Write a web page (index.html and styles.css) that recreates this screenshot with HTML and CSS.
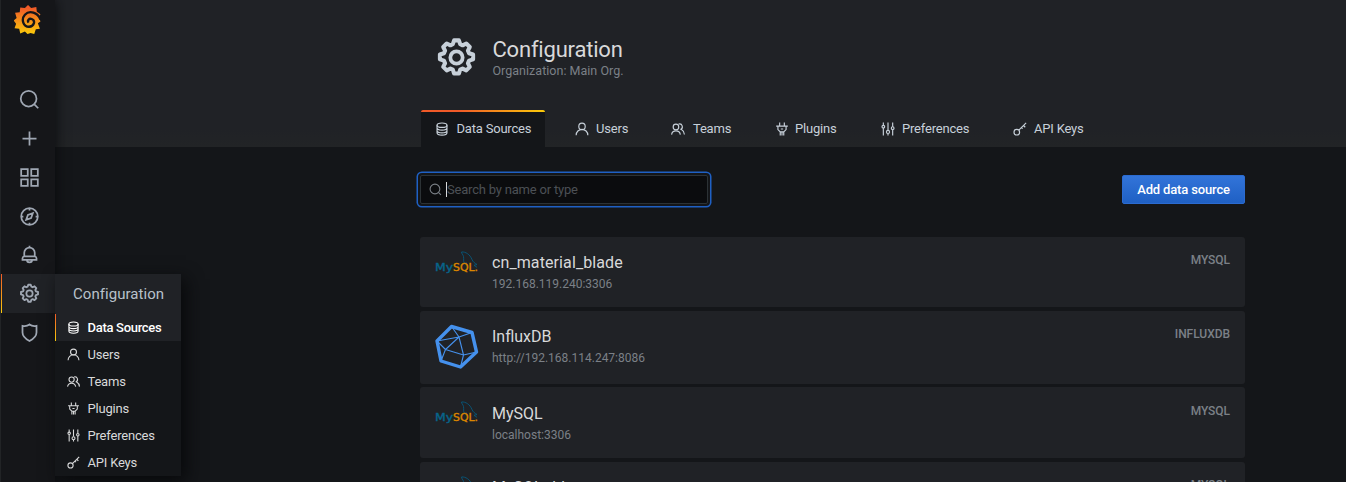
FILE: index.html
```html
<!DOCTYPE html>
<html lang="en">
<head>
<meta charset="utf-8">
<title>Configuration: Data Sources</title>
<link rel="stylesheet" href="styles.css">
</head>
<body>
<svg class="defs" width="0" height="0">
  <defs>
    <linearGradient id="flame" x1="0" y1="0" x2="0" y2="1"><stop offset="0.1" stop-color="#f05a28"/><stop offset="1" stop-color="#fbca0a"/></linearGradient>
    <symbol id="search" viewBox="0 0 24 24"><circle cx="11" cy="11" r="9"/><path d="M17.500 17.500l4.500 4.500"/></symbol>
    <symbol id="plus" viewBox="0 0 24 24"><path d="M12 4v16M4 12h16"/></symbol>
    <symbol id="apps" viewBox="0 0 24 24"><path d="M2.500 2.500h7.500v7.500H2.500zM14 2.500h7.500v7.500H14zM2.500 14h7.500v7.500H2.500zM14 14h7.500v7.500H14z"/></symbol>
    <symbol id="compass" viewBox="0 0 24 24"><circle cx="12" cy="12" r="9.500"/><path d="M12 3v2M12 19v2M3 12h2M19 12h2M15.800 8.200l-2 5.500-5.600 2.100 2-5.500z"/></symbol>
    <symbol id="bell" viewBox="0 0 24 24"><path d="M12 2v2M6 14v-4a6 6 0 0 1 12 0v4M6 14a2.500 2.500 0 0 0-2 2.300V18h16v-1.700a2.500 2.500 0 0 0-2-2.300zM9 18a3 3 0 0 0 6 0"/></symbol>
    <symbol id="cog" viewBox="0 0 24 24"><circle cx="12" cy="12" r="3.600"/><path stroke-linejoin="round" d="M10 4.100 10.700 2h2.600l.7 2.100 1.300.6 2-1 1.900 1.900-1 2 .6 1.400 2.200.7v2.600l-2.200.7-.6 1.400 1 2-1.900 1.900-2-1-1.300.6-.7 2.100h-2.600l-.7-2.100-1.300-.6-2 1-1.900-1.900 1-2-.6-1.400-2.200-.7V9.700l2.200-.7.600-1.400-1-2 1.900-1.900 2 1z" transform="matrix(1.080 0 0 1.080 -.96 -.2)"/></symbol>
    <symbol id="shield" viewBox="0 0 24 24"><path d="M4 4.400q4.600 1 8-1.600 3.400 2.600 8 1.600V12c0 4.500-3.300 7.200-8 9.700-4.700-2.500-8-5.200-8-9.700z"/></symbol>
    <symbol id="database" viewBox="0 0 24 24"><ellipse cx="12" cy="5.500" rx="8.500" ry="3.800"/><path d="M3.500 5.500v13c0 2.200 3.800 4 8.500 4s8.500-1.800 8.500-4v-13M3.500 10c0 2.200 3.800 4 8.500 4s8.500-1.800 8.500-4M3.500 14.500c0 2.200 3.800 4 8.500 4s8.500-1.800 8.500-4"/></symbol>
    <symbol id="user" viewBox="0 0 24 24"><circle cx="12" cy="7.500" r="5.500"/><path d="M2 22.500a10 10 0 0 1 20 0"/></symbol>
    <symbol id="users" viewBox="0 0 24 24"><circle cx="8.500" cy="8.500" r="4.800"/><path d="M1 21.500a7.600 7.600 0 0 1 15 0M13 3.500a4.800 4.800 0 1 1 3 9.300M18 13q4.500 2.500 5 8.500"/></symbol>
    <symbol id="plug" viewBox="0 0 24 24"><path d="M8 1v6M16 1v6M2 7h20M5 7v6l4 4h6l4-4V7M9 17v6M15 17v6M12 17v6M10 12h4"/></symbol>
    <symbol id="sliders" viewBox="0 0 24 24"><path d="M4 1v5M4 10v13M12 1v13M12 20v3M20 1v7M20 13v10"/><circle cx="4" cy="8" r="2.300"/><circle cx="12" cy="17" r="2.700"/><circle cx="20" cy="10.500" r="2.300"/></symbol>
    <symbol id="key" viewBox="0 0 24 24"><circle cx="6.500" cy="17.500" r="4.800"/><path d="M10 14 22.500 1.500M18 6l3 3M14.500 9.500l2 2"/></symbol>
    <symbol id="mysql" viewBox="0 0 44 24">
      <path d="M26.500 1c4-.5 8.500 2.500 10.500 7.500 1 2.500 2.500 3.500 5 5l-3 .8 3 2M26.500 1c0 1.500 1.500 2.500 2 4.500.5 2.500-.5 5 1 7 1.300 1.200 1.800-1.500 1.800-1.500" fill="none" stroke="#07587c" stroke-width=".9"/>
      <text class="logo-my" x="0" y="20.300" textLength="18" lengthAdjust="spacingAndGlyphs">My</text>
      <text class="logo-sql" x="18" y="20.300" textLength="25" lengthAdjust="spacingAndGlyphs">SQL.</text>
    </symbol>
  </defs>
</svg>
<div class="app">
  <nav class="sidebar">
    <svg class="brand" viewBox="0 0 52 56"><path fill="url(#flame)" d="M27 0l6 6 10-2 1 9 7 5-3 5 3 9-5 3 4 11-8 1-3 9-7-2-6 2-5-5-9 4-2-9-9-1 3-9-5-6 6-5-3-10 9-1 1-9 9 1z"/><path fill="none" stroke="#151619" stroke-width="4.500" d="M51 28C46 15 30 9 21 19c-8 9-3 23 8 23 10 0 13-12 5-15-5-2-9 3-6 7"/></svg>
    <a class="side-link"><svg><use href="#search"/></svg></a>
    <a class="side-link"><svg><use href="#plus"/></svg></a>
    <a class="side-link"><svg><use href="#apps"/></svg></a>
    <a class="side-link"><svg><use href="#compass"/></svg></a>
    <a class="side-link"><svg><use href="#bell"/></svg></a>
    <div class="side-link current"><svg><use href="#cog"/></svg>
      <div class="menu">
        <div class="menu-title">Configuration</div>
        <a class="menu-item selected"><svg><use href="#database"/></svg>Data Sources</a>
        <a class="menu-item"><svg><use href="#user"/></svg>Users</a>
        <a class="menu-item"><svg><use href="#users"/></svg>Teams</a>
        <a class="menu-item"><svg><use href="#plug"/></svg>Plugins</a>
        <a class="menu-item"><svg><use href="#sliders"/></svg>Preferences</a>
        <a class="menu-item"><svg><use href="#key"/></svg>API Keys</a>
      </div>
    </div>
    <a class="side-link"><svg><use href="#shield"/></svg></a>
  </nav>
  <main class="main">
    <header class="header">
      <div class="heading">
        <svg class="heading-icon"><use href="#cog"/></svg>
        <div><h1>Configuration</h1><p class="org">Organization: Main Org.</p></div>
      </div>
      <div class="tabs">
        <a class="tab active"><svg><use href="#database"/></svg>Data Sources</a>
        <a class="tab"><svg><use href="#user"/></svg>Users</a>
        <a class="tab wide"><svg><use href="#users"/></svg>Teams</a>
        <a class="tab narrow"><svg><use href="#plug"/></svg>Plugins</a>
        <a class="tab"><svg><use href="#sliders"/></svg>Preferences</a>
        <a class="tab"><svg><use href="#key"/></svg>API Keys</a>
      </div>
    </header>
    <section class="content">
      <div class="toolbar">
        <div class="search"><svg><use href="#search"/></svg><span class="caret"></span>Search by name or type</div>
        <button class="add">Add data source</button>
      </div>
      <div class="list">
        <article class="card"><svg class="logo"><use href="#mysql"/></svg><div class="info"><h2 class="long">cn_material_blade</h2><p>192.168.119.240:3306</p></div><span class="type">MYSQL</span></article>
        <article class="card"><svg class="logo influx" viewBox="0 0 44 46"><g fill="none" stroke="#4591ed" stroke-linejoin="round"><path stroke-width="3.400" d="M16.500 2.500 37 8.500 41.500 28 25.500 43 6 37 2 17z"/><path stroke-width="1.100" d="M16.500 2.500 24 13 37 8.500M24 13 2 17 10.500 25.500 24 13 28.500 31 41.500 28M10.500 25.500 28.500 31 25.500 43M10.500 25.500 6 37"/></g></svg><div class="info"><h2>InfluxDB</h2><p>http://192.168.114.247:8086</p></div><span class="type">INFLUXDB</span></article>
        <article class="card lower"><svg class="logo"><use href="#mysql"/></svg><div class="info"><h2>MySQL</h2><p>localhost:3306</p></div><span class="type">MYSQL</span></article>
        <article class="card"><svg class="logo"><use href="#mysql"/></svg><div class="info"><h2>MySQL-tbk</h2><p>localhost:3306</p></div><span class="type">MYSQL</span></article>
      </div>
    </section>
  </main>
</div>
</body>
</html>
```
FILE: styles.css
```css
* { box-sizing: border-box; }
body { margin: 0; height: 482px; overflow: hidden; background: #141619; color: #c7d0d9; font: 13px/20px Roboto, sans-serif; letter-spacing: -.2px; }
h1, h2, p { margin: 0; font-weight: 400; }
svg { fill: none; stroke: currentColor; stroke-width: 2; flex: none; }
.defs { position: absolute; }
.app { display: flex; height: 482px; overflow: hidden; }
.sidebar { width: 55px; flex: none; background: #151619; border-left: 1px solid #222426; color: #9fa7b3; display: flex; flex-direction: column; box-shadow: 0 0 12px #08090b; position: relative; z-index: 2; }
.brand { width: 27px; height: 29px; margin: 5px 0 46.600px 13px; stroke: none; }
.side-link { position: relative; height: 38.700px; flex: none; display: flex; align-items: center; justify-content: center; padding-left: 2px; }
.side-link > svg { width: 21px; height: 21px; }
.current { background: #202226; }
.current::before, .selected::before { content: ""; position: absolute; left: 0; top: 0; bottom: 0; width: 1px; background: linear-gradient(#f05a28, #fbca0a); }
.menu { position: absolute; left: 54px; top: 0; width: 126px; height: 202px; background: #141619; box-shadow: 5px 5px 16px #08090b; }
.menu-title { height: 40px; padding: 0 18px; background: #202226; font-size: 15px; line-height: 40px; color: #b8c1ca; letter-spacing: .05px; }
.menu-item { position: relative; display: flex; align-items: center; gap: 8px; height: 27px; padding-left: 11.500px; color: #d8d9da; }
.menu-item svg { width: 13px; height: 13px; }
.selected { background: #202226; color: #fff; font-weight: 500; letter-spacing: -.3px; }
.main { flex: 1; min-width: 0; }
.header { height: 147px; background: linear-gradient(#202226 88%, #222426); padding-left: 366px; }
.heading { height: 110px; padding: 37px 0 0 15px; display: flex; gap: 16px; }
.heading-icon { width: 41px; height: 41px; color: #c7d0d9; stroke-width: 2.200; }
h1 { font-size: 22px; line-height: 26px; color: #d8d9da; letter-spacing: -.2px; margin-left: -.5px; }
.org { line-height: 16px; color: #7b8087; font-size: 12.500px; letter-spacing: .02px; margin-left: -.5px; }
.tabs { display: grid; grid-template-columns: 139px 96px 104px 106px 132px 110px; height: 37px; }
.tab { display: flex; align-items: center; gap: 7px; padding-left: 15px; }
.tab svg { width: 14px; height: 14px; }
.tab.wide { gap: 8px; }
.tab.narrow { gap: 6px; }
.active { width: 124px; gap: 7.500px; padding-left: 14px; background: #141619; position: relative; }
.active::before { content: ""; position: absolute; left: 0; right: 0; top: 0; height: 2px; border-radius: 2px 2px 0 0; background: linear-gradient(90deg, #f05a28 30%, #fbca0a); }
.content { padding: 28px 101px 0 365px; }
.toolbar { display: flex; justify-content: space-between; height: 62px; }
.search { width: 288px; height: 29px; display: flex; align-items: center; padding-left: 8px; background: #0b0c0e; border: 1px solid #2c3235; border-radius: 2px; box-shadow: 0 0 0 2px #141619, 0 0 0 3.500px #1f60c4; color: #4c5055; }
.search svg { width: 13px; height: 13px; color: #7b8087; margin-right: 4px; }
.caret { width: 1px; height: 15px; background: #d8d9da; }
.add { width: 123px; height: 29px; padding: 0; border: 1px solid #2b6bd0; border-radius: 2px; background: linear-gradient(#3274d9, #1f60c4); color: #fff; font: 500 13px/20px Roboto, sans-serif; letter-spacing: -.15px; }
.list { display: grid; grid-template-rows: 70px 73px 71px 71px; row-gap: 3.670px; }
.card { display: flex; padding: 14px 15px; background: #202226; border-radius: 3px; letter-spacing: 0; }
.logo { width: 44px; height: 24px; margin-right: 13px; }
.influx { height: 46px; margin-top: -1px; margin-left: -.5px; margin-right: 13.500px; }
.logo-my, .logo-sql { font: 9.700px/1 "DejaVu Sans", sans-serif; stroke-width: .35; letter-spacing: 0; }
.logo-my { fill: #07658b; stroke: #07658b; }
.logo-sql { fill: #dc8600; stroke: #dc8600; }
h2 { font-size: 16px; line-height: 22px; color: #d8d9da; }
.long { letter-spacing: .1px; }
.info { padding-top: 1px; }
.lower .info { padding-top: 2px; }
.info p { color: #7b8087; font-size: 12px; line-height: 21px; }
.type { margin-left: auto; font-size: 12px; line-height: 18px; color: #7b8087; font-weight: 500; letter-spacing: -.05px; }
.lower .type { padding-top: 1px; }
```
